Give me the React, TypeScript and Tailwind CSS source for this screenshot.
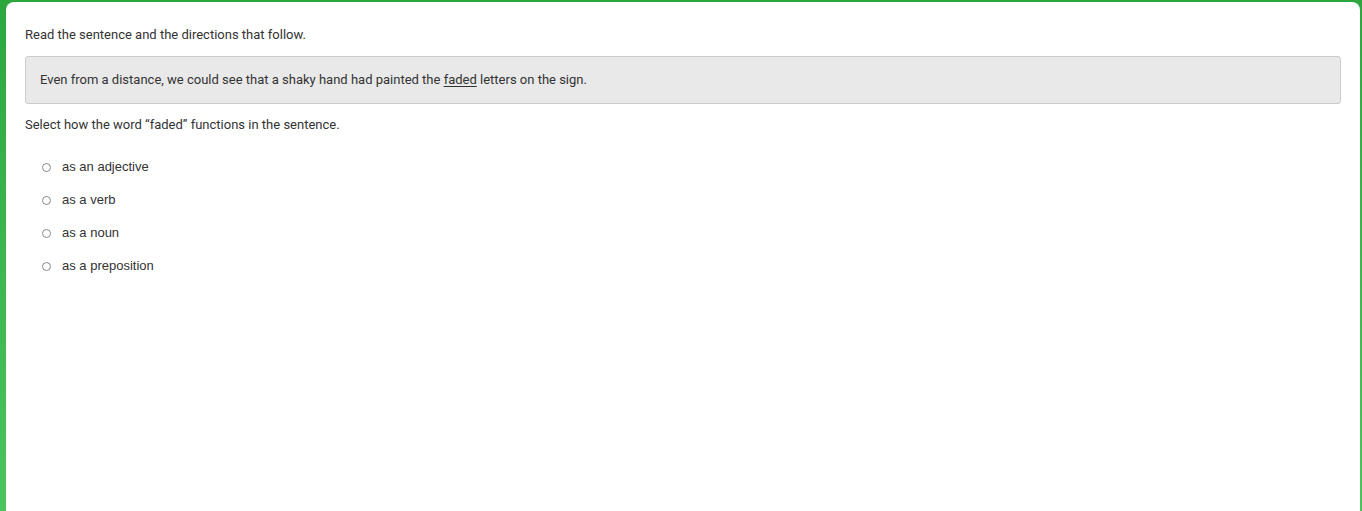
export default function App() {
  const options = ['as an adjective', 'as a verb', 'as a noun', 'as a preposition'];

  return (
    <div className="w-[1362px] h-[511px] bg-gradient-to-b from-[#2ea63e] to-[#4cc35b] pl-[6px] pr-[2px] pt-[2px] overflow-hidden">
      <div
        className="h-full bg-white rounded-t-[8px] px-[19px] pt-[24px] text-[#333] text-[13px]"
        style={{ fontFamily: 'Roboto, "Liberation Sans", sans-serif' }}
      >
        <p className="leading-[18px]">Read the sentence and the directions that follow.</p>

        <div className="mt-[12px] h-[48px] flex items-center px-[14px] bg-[#e9e9e9] border border-[#cccccc] rounded-[3px]">
          <p className="leading-[18px]">
            Even from a distance, we could see that a shaky hand had painted the{' '}
            <span className="underline underline-offset-2">faded</span> letters on the sign.
          </p>
        </div>

        <p className="mt-[12px] leading-[18px]">Select how the word “faded” functions in the sentence.</p>

        <div
          className="mt-[24px] flex flex-col gap-[15px] pl-[17px]"
          style={{ fontFamily: '"Liberation Sans", Arial, sans-serif' }}
        >
          {options.map((o) => (
            <label key={o} className="flex items-center h-[18px] cursor-pointer">
              <span className="w-[9px] h-[9px] rounded-full border border-[#888] bg-white"></span>
              <span className="ml-[11px] leading-[18px]">{o}</span>
            </label>
          ))}
        </div>
      </div>
    </div>
  );
}
